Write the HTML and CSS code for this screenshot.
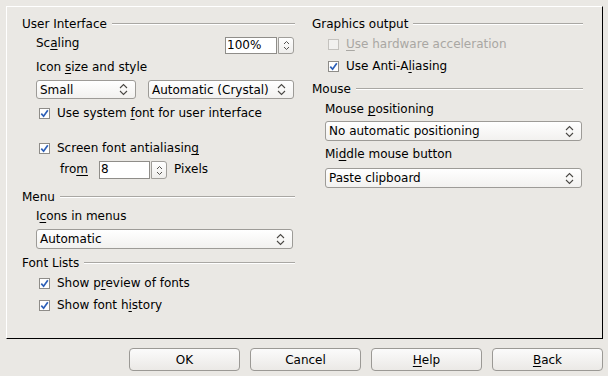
FILE: index.html
```html
<!DOCTYPE html>
<html>
<head>
<meta charset="utf-8">
<title>Options</title>
<link rel="stylesheet" href="styles.css">
</head>
<body>
<div class="panel">
  <div class="col left">
    <div class="group"><span>User Interface</span><i class="rule"></i></div>
    <div class="ind">
      <div class="row scaling">
        <span>Sc<u>a</u>ling</span>
        <div class="spin spin-scale">
          <span class="field">100%</span>
          <span class="spinbtn"><svg width="7" height="11" viewBox="0 0 7 11"><path d="M1 4 L3.5 1.5 L6 4 M1 7 L3.5 9.5 L6 7" fill="none" stroke="#55534f" stroke-width="1"/></svg></span>
        </div>
      </div>
      <div class="label icon-label">Icon <u>s</u>ize and style</div>
      <div class="row selects">
        <div class="select sel-small"><span>Small</span><svg class="chev" width="9" height="13" viewBox="0 0 9 13"><path d="M1 5 L4.5 1.5 L8 5 M1 8 L4.5 11.5 L8 8" fill="none" stroke="#4a4844" stroke-width="1.1"/></svg></div>
        <div class="select sel-style"><span>Automatic (Crystal)</span><svg class="chev" width="9" height="13" viewBox="0 0 9 13"><path d="M1 5 L4.5 1.5 L8 5 M1 8 L4.5 11.5 L8 8" fill="none" stroke="#4a4844" stroke-width="1.1"/></svg></div>
      </div>
      <div class="check sysfont"><span class="box"><svg width="9" height="9" viewBox="0 0 9 9"><path d="M1.3 4.6 L3.6 7.2 L7.8 1.3" fill="none" stroke="#2c5fb8" stroke-width="1.7"/></svg></span><span>Use system <u>f</u>ont for user interface</span></div>
      <div class="check antialias"><span class="box"><svg width="9" height="9" viewBox="0 0 9 9"><path d="M1.3 4.6 L3.6 7.2 L7.8 1.3" fill="none" stroke="#2c5fb8" stroke-width="1.7"/></svg></span><span>Screen font antialiasin<u>g</u></span></div>
      <div class="row fromrow">
        <span class="from">fro<u>m</u></span>
        <div class="spin spin-px">
          <span class="field">8</span>
          <span class="spinbtn"><svg width="7" height="11" viewBox="0 0 7 11"><path d="M1 4 L3.5 1.5 L6 4 M1 7 L3.5 9.5 L6 7" fill="none" stroke="#55534f" stroke-width="1"/></svg></span>
        </div>
        <span class="pixels">Pixels</span>
      </div>
    </div>
    <div class="group menu-group"><span>Menu</span><i class="rule"></i></div>
    <div class="ind">
      <div class="label icons-label">I<u>c</u>ons in menus</div>
      <div class="select sel-wide sel-icons"><span>Automatic</span><svg class="chev" width="9" height="13" viewBox="0 0 9 13"><path d="M1 5 L4.5 1.5 L8 5 M1 8 L4.5 11.5 L8 8" fill="none" stroke="#4a4844" stroke-width="1.1"/></svg></div>
    </div>
    <div class="group fonts-group"><span>Font Lists</span><i class="rule"></i></div>
    <div class="ind">
      <div class="check preview"><span class="box"><svg width="9" height="9" viewBox="0 0 9 9"><path d="M1.3 4.6 L3.6 7.2 L7.8 1.3" fill="none" stroke="#2c5fb8" stroke-width="1.7"/></svg></span><span>Show p<u>r</u>eview of fonts</span></div>
      <div class="check history"><span class="box"><svg width="9" height="9" viewBox="0 0 9 9"><path d="M1.3 4.6 L3.6 7.2 L7.8 1.3" fill="none" stroke="#2c5fb8" stroke-width="1.7"/></svg></span><span>Show font h<u>i</u>story</span></div>
    </div>
  </div>
  <div class="col right">
    <div class="group"><span>Graphics output</span><i class="rule"></i></div>
    <div class="ind-r">
      <div class="check hwaccel disabled"><span class="box"></span><span><u>U</u>se hardware acceleration</span></div>
      <div class="check antialias2"><span class="box"><svg width="9" height="9" viewBox="0 0 9 9"><path d="M1.3 4.6 L3.6 7.2 L7.8 1.3" fill="none" stroke="#2c5fb8" stroke-width="1.7"/></svg></span><span>Use Anti-A<u>l</u>iasing</span></div>
    </div>
    <div class="group mouse-group"><span>Mouse</span><i class="rule"></i></div>
    <div class="ind-r">
      <div class="label mpos-label">Mouse <u>p</u>ositioning</div>
      <div class="select sel-wide sel-mpos"><span>No automatic positioning</span><svg class="chev" width="9" height="13" viewBox="0 0 9 13"><path d="M1 5 L4.5 1.5 L8 5 M1 8 L4.5 11.5 L8 8" fill="none" stroke="#4a4844" stroke-width="1.1"/></svg></div>
      <div class="label middle-label">Mi<u>d</u>dle mouse button</div>
      <div class="select sel-wide sel-middle"><span>Paste clipboard</span><svg class="chev" width="9" height="13" viewBox="0 0 9 13"><path d="M1 5 L4.5 1.5 L8 5 M1 8 L4.5 11.5 L8 8" fill="none" stroke="#4a4844" stroke-width="1.1"/></svg></div>
    </div>
  </div>
</div>
<div class="buttons">
  <button class="button">OK</button>
  <button class="button">Cancel</button>
  <button class="button"><u>H</u>elp</button>
  <button class="button"><u>B</u>ack</button>
</div>
</body>
</html>
```
FILE: styles.css
```css
* { box-sizing: border-box; }
html, body { margin: 0; padding: 0; }
body {
  width: 608px;
  height: 376px;
  overflow: hidden;
  background: #eae8e4;
  font-family: "DejaVu Sans", sans-serif;
  font-size: 12px;
  line-height: 14px;
  color: #000;
}
u { text-decoration: underline; text-underline-offset: 2px; }

.panel {
  margin: 6px 0 0 6px;
  width: 597px;
  height: 333px;
  border-top: 1px solid #fff;
  border-left: 1px solid #fff;
  border-right: 1px solid #000;
  border-bottom: 1px solid #000;
  display: flex;
  gap: 17px;
  padding: 0 19px 0 15px;
}
.col { display: flex; flex-direction: column; padding-top: 10px; }
.left { width: 273px; }
.right { width: 271px; }

.group { display: flex; align-items: center; height: 14px; }
.rule {
  flex: 1;
  margin-left: 5px;
  height: 2px;
  border-top: 1px solid #a9a7a3;
  border-bottom: 1px solid #fff;
}
.menu-group { margin-top: 12px; }
.fonts-group { margin-top: 7px; }
.mouse-group { margin-top: 9px; }

.ind { padding-left: 14px; width: 272px; }
.ind-r { padding-left: 13px; }

.row { display: flex; }
.label { height: 14px; }

.scaling { margin-top: 5px; justify-content: space-between; height: 18px; }
.icon-label { margin-top: 6px; }
.selects { margin-top: 6px; gap: 12px; }
.sysfont { margin-top: 7px; }
.antialias { margin-top: 21px; }
.fromrow { margin-top: 6px; height: 17px; align-items: flex-start; }
.icons-label { margin-top: 5px; }
.sel-icons { margin-top: 6px; }
.preview { margin-top: 6px; }
.history { margin-top: 8px; }

.hwaccel { margin-top: 6px; }
.antialias2 { margin-top: 8px; }
.mpos-label { margin-top: 6px; }
.sel-mpos { margin-top: 5px; }
.middle-label { margin-top: 6px; }
.sel-middle { margin-top: 7px; }

/* select boxes */
.select {
  display: flex;
  align-items: center;
  justify-content: space-between;
  height: 20px;
  padding: 0 7px 0 3px;
  border: 1px solid #9d9b97;
  border-radius: 3px;
  background: linear-gradient(#ffffff, #f2f1ef);
}
.selects .select { height: 19px; }
.sel-small { width: 100px; }
.sel-style { width: 146px; }
.sel-wide { width: 257px; }
.chev { display: block; }

/* spin boxes */
.spin { display: flex; height: 17px; margin-top: 1px; }
.spin-scale { width: 69px; }
.spin-px { width: 68px; margin-top: 0; height: 18px; }
.spin .field {
  flex: 1;
  background: #fff;
  border: 1px solid #8f8d89;
  padding-left: 1px;
  line-height: 15px;
}
.spinbtn {
  width: 16px;
  margin-left: 1px;
  border: 1px solid #a09e9a;
  border-radius: 0 3px 3px 0;
  background: linear-gradient(#ffffff, #eeedeb);
  display: flex;
  align-items: center;
  justify-content: center;
}
.from { margin-left: 24px; margin-top: 1px; width: 39px; }
.pixels { margin-left: 7px; margin-top: 1px; }

/* checkboxes */
.check { display: flex; align-items: center; height: 14px; padding-left: 3px; }
.box {
  width: 11px;
  height: 11px;
  border: 1px solid #8e8c88;
  background: #fff;
  margin-right: 7px;
  display: flex;
  align-items: center;
  justify-content: center;
}
.box svg { display: block; }
.disabled { color: #a9a7a3; }
.disabled .box { border-color: #c4c2be; background: #f2f1ef; }

/* dialog buttons */
.buttons {
  display: flex;
  justify-content: flex-end;
  gap: 10px;
  margin-top: 9px;
  padding-right: 5px;
}
.button {
  width: 111px;
  height: 23px;
  margin: 0;
  padding: 0;
  border: 1px solid #9b9995;
  border-radius: 4px;
  background: linear-gradient(#fbfbfb, #ebe9e6);
  font-family: "DejaVu Sans", sans-serif;
  font-size: 12px;
  line-height: 14px;
  color: #000;
}
```
